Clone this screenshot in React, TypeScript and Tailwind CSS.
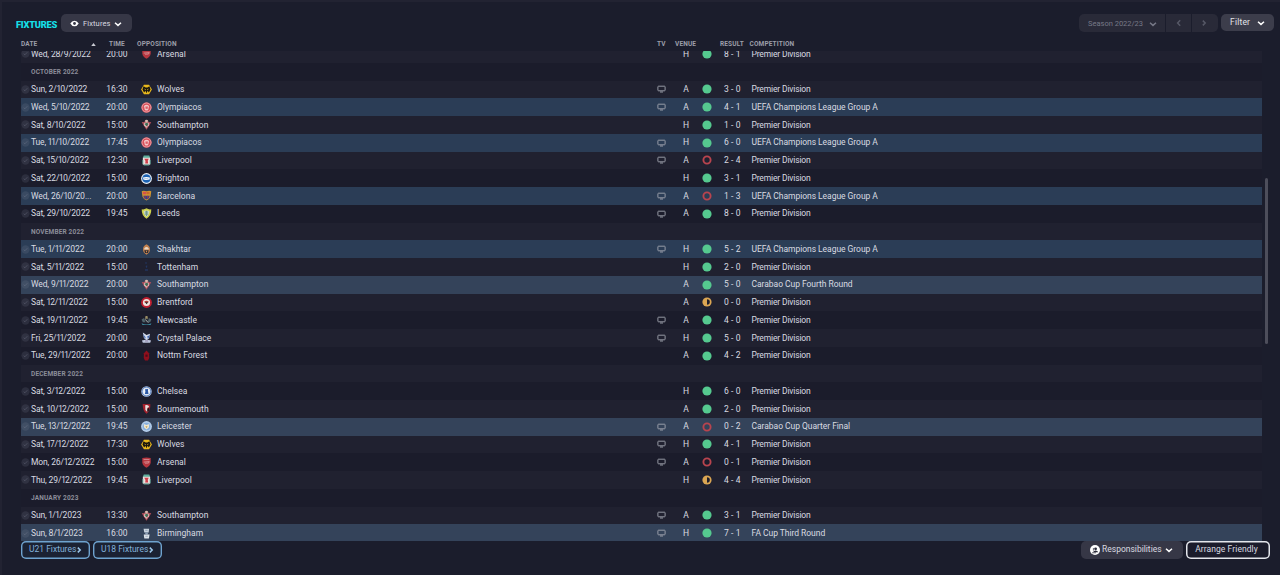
import type { ReactNode } from "react";

type Outcome = "win" | "draw" | "loss";
type Kind = "league" | "europe" | "cup";

interface Fixture {
  date: string;
  time: string;
  club: string;
  tv: boolean;
  venue: "H" | "A";
  outcome: Outcome;
  result: string;
  competition: string;
  kind: Kind;
}

interface MonthHeader {
  month: string;
}

const PL = "Premier Division";
const UCL = "UEFA Champions League Group A";

function match(
  date: string,
  time: string,
  club: string,
  tv: boolean,
  venue: "H" | "A",
  outcome: Outcome,
  result: string,
  competition: string = PL
): Fixture {
  const kind = competition === PL ? "league" : competition === UCL ? "europe" : "cup";
  return { date, time, club, tv, venue, outcome, result, competition, kind };
}

const rows: (Fixture | MonthHeader)[] = [
  match("Wed, 28/9/2022", "20:00", "Arsenal", false, "H", "win", "8 - 1"),
  { month: "October 2022" },
  match("Sun, 2/10/2022", "16:30", "Wolves", true, "A", "win", "3 - 0"),
  match("Wed, 5/10/2022", "20:00", "Olympiacos", true, "A", "win", "4 - 1", UCL),
  match("Sat, 8/10/2022", "15:00", "Southampton", false, "H", "win", "1 - 0"),
  match("Tue, 11/10/2022", "17:45", "Olympiacos", true, "H", "win", "6 - 0", UCL),
  match("Sat, 15/10/2022", "12:30", "Liverpool", true, "A", "loss", "2 - 4"),
  match("Sat, 22/10/2022", "15:00", "Brighton", false, "H", "win", "3 - 1"),
  match("Wed, 26/10/20...", "20:00", "Barcelona", true, "A", "loss", "1 - 3", UCL),
  match("Sat, 29/10/2022", "19:45", "Leeds", true, "A", "win", "8 - 0"),
  { month: "November 2022" },
  match("Tue, 1/11/2022", "20:00", "Shakhtar", true, "H", "win", "5 - 2", UCL),
  match("Sat, 5/11/2022", "15:00", "Tottenham", false, "H", "win", "2 - 0"),
  match("Wed, 9/11/2022", "20:00", "Southampton", false, "A", "win", "5 - 0", "Carabao Cup Fourth Round"),
  match("Sat, 12/11/2022", "15:00", "Brentford", false, "A", "draw", "0 - 0"),
  match("Sat, 19/11/2022", "19:45", "Newcastle", true, "A", "win", "4 - 0"),
  match("Fri, 25/11/2022", "20:00", "Crystal Palace", true, "H", "win", "5 - 0"),
  match("Tue, 29/11/2022", "20:00", "Nottm Forest", false, "A", "win", "4 - 2"),
  { month: "December 2022" },
  match("Sat, 3/12/2022", "15:00", "Chelsea", false, "H", "win", "6 - 0"),
  match("Sat, 10/12/2022", "15:00", "Bournemouth", false, "A", "win", "2 - 0"),
  match("Tue, 13/12/2022", "19:45", "Leicester", true, "A", "loss", "0 - 2", "Carabao Cup Quarter Final"),
  match("Sat, 17/12/2022", "17:30", "Wolves", true, "H", "win", "4 - 1"),
  match("Mon, 26/12/2022", "15:00", "Arsenal", true, "A", "loss", "0 - 1"),
  match("Thu, 29/12/2022", "19:45", "Liverpool", false, "H", "draw", "4 - 4"),
  { month: "January 2023" },
  match("Sun, 1/1/2023", "13:30", "Southampton", true, "A", "win", "3 - 1"),
  match("Sun, 8/1/2023", "16:00", "Birmingham", true, "H", "win", "7 - 1", "FA Cup Third Round"),
];

const crests: Record<string, ReactNode> = {
  Arsenal: (
    <>
      <path d="M1.4 1.2Q6 0 10.6 1.2V6.4Q10 9.8 6 11.8Q2 9.8 1.4 6.4Z" fill="#b5363f" />
      <path d="M2.8 2.8H9.2M3 5.6L9 5L8.2 6.6L4.4 6.8" stroke="#dba3a7" strokeWidth="0.8" fill="none" />
    </>
  ),
  Wolves: (
    <>
      <path d="M3.2 0.8H8.8L11.9 6L8.8 11.2H3.2L0.1 6Z" fill="#e9b91c" />
      <path d="M2.8 2.4L5 3.8H7L9.2 2.4L10.4 6L8.6 9.4L7.2 7.4L6 10L4.8 7.4L3.4 9.4L1.6 6Z" fill="#17150f" />
      <path d="M3.6 5L5.4 6L4.6 6.9ZM8.4 5L6.6 6L7.4 6.9Z" fill="#e9b91c" />
    </>
  ),
  Olympiacos: (
    <>
      <circle cx="6" cy="6" r="5.6" fill="#d8505a" />
      <circle cx="6" cy="6" r="4.9" fill="none" stroke="#efb7ba" strokeWidth="0.8" />
      <path d="M3.2 4.4Q6 1.8 8.8 4.4L7.8 8.6Q6 9.8 4.2 8.6Z" fill="#f3c6c8" />
      <path d="M4.8 4.8L7.6 4.8L7.2 7.6L5 7.4Z" fill="#dc6069" />
    </>
  ),
  Southampton: (
    <>
      <path d="M0.8 3.2L3.6 3.6L4.6 1H7.4L8.4 3.6L11.2 3.2L9.6 6.4L6 11.6L2.4 6.4Z" fill="#b3505a" />
      <path d="M3.8 4H8.2L8.4 6.8L6 9.6L3.6 6.8Z" fill="#e4dcd8" />
      <circle cx="6" cy="2.2" r="1.5" fill="#cfc0b2" />
      <path d="M4.8 4.4H7.4L7.8 6.6L6 7.8L4.4 6.6Z" fill="#3d7057" />
      <path d="M6 7.6L7.8 5.8L6.6 9Z" fill="#b8434a" />
    </>
  ),
  Liverpool: (
    <>
      <path d="M3 0.6H9L10 3.2H2Z" fill="#5fb09d" />
      <path d="M2 3H10V10.6H2Z" fill="#e9dedd" />
      <path d="M3.6 4.2H8.4L7.4 6.2L7.8 9.4H4.6L4.9 6.6Z" fill="#cf3f4a" />
      <path d="M2 5.4V10M10 5.4V10M3 11H9" stroke="#5fb09d" strokeWidth="0.9" />
    </>
  ),
  Brighton: (
    <>
      <circle cx="6" cy="6" r="5.9" fill="#e8eff6" />
      <circle cx="6" cy="6" r="4.7" fill="#1c63b4" />
      <path d="M2.2 5Q6 3.8 9.6 5L9.4 7.2Q6 8.2 2.6 7Z" fill="#fff" />
      <path d="M3.4 6.2H8" stroke="#5e93cf" strokeWidth="0.6" />
    </>
  ),
  Barcelona: (
    <>
      <path d="M0.8 1.4L3 0.8L6 1.4L9 0.8L11.2 1.4L10.4 7.4Q9 10.4 6 11.4Q3 10.4 1.6 7.4Z" fill="#d2952f" />
      <path d="M2 2H5.6V4.6H2Z" fill="#d6524b" />
      <path d="M6.8 2V4.6M8.6 2V4.6" stroke="#c0392b" strokeWidth="0.8" />
      <path d="M2.4 6.4H9.6L8.6 9L6 10.4L3.4 9Z" fill="#30468a" />
      <path d="M4.4 6.4V9.4M7.4 6.4V9.4" stroke="#a82b4c" strokeWidth="1.1" />
    </>
  ),
  Leeds: (
    <>
      <path d="M0.8 1.4Q3.5 2 6 0.4Q8.5 2 11.2 1.4Q11.6 8 6 11.8Q0.4 8 0.8 1.4Z" fill="#ccd04c" />
      <path d="M3 3.4Q6 1.8 9 3.4Q9.2 7.4 6 9.8Q2.8 7.4 3 3.4Z" fill="#e8ecd9" />
      <path d="M4.6 3.4V8M6 3V9M7.4 3.4V8" stroke="#3f7a72" strokeWidth="0.8" />
    </>
  ),
  Shakhtar: (
    <>
      <path d="M6 0.4Q10 2.4 9.8 6Q9.8 9.6 6 11.6Q2.2 9.6 2.2 6Q2 2.4 6 0.4Z" fill="#c0804e" />
      <path d="M3.6 5Q6 1.8 8.4 5V6H3.6Z" fill="#ead7c3" />
      <path d="M3.6 6.8H8.4L7.6 9.8H4.4Z" fill="#2b2a34" />
      <path d="M5.4 7.4H6.6V9H5.4Z" fill="#d58a44" />
    </>
  ),
  Tottenham: (
    <path d="M4.6 1.4H6.2V3H4.8ZM5 5.4L6.8 4.6V6.6L6 8ZM4.4 9H7.6V10.6H4.4Z" fill="#22355f" />
  ),
  Brentford: (
    <>
      <circle cx="6" cy="6" r="5.9" fill="#bf1f30" />
      <circle cx="6" cy="6" r="3.9" fill="#efe4df" />
      <path d="M3.6 5Q6 3 8.4 5L7.8 6.4H4.2Z" fill="#b4413c" />
      <path d="M4.4 5.8H7.6L6.2 8Z" fill="#27211f" />
    </>
  ),
  Newcastle: (
    <>
      <path d="M5 1H7L7.6 4H4.4Z" fill="#9c8f66" />
      <path d="M0.6 4.8L3.4 3.4L5 8H2Z" fill="#52666d" />
      <path d="M11.4 4.8L8.6 3.4L7 8H10Z" fill="#52666d" />
      <path d="M4 4.4H8L7.6 8.2H4.4Z" fill="#262c35" />
      <path d="M0.6 9Q6 11.8 11.4 9L10.4 11H1.6Z" fill="#3d8ea3" />
      <path d="M4.6 4.8L8 8.4" stroke="#c9cdd0" strokeWidth="0.9" />
    </>
  ),
  "Crystal Palace": (
    <>
      <path d="M2 0.6L6 3.4L9.8 2L8.8 7L6 9L3.2 6.6Z" fill="#d5dcec" />
      <path d="M2 2L5 5.6L4.4 8ZM6.8 4.6L9.8 3.6L7.6 7.8Z" fill="#4168b4" />
      <path d="M1 9.2L6 8.2L11 9.2L10 11.6H2Z" fill="#bdc6dd" />
      <path d="M4.4 9.8H7.8" stroke="#7f6a92" strokeWidth="0.8" />
    </>
  ),
  "Nottm Forest": (
    <>
      <path d="M6 0.6L8.8 3.6L9 8.8L7.6 11.4H4.4L3 8.8L3.2 3.6Z" fill="#8f0f1d" />
      <path d="M4.8 5H7.2V7.4H4.8Z" fill="#4c0c18" />
    </>
  ),
  Chelsea: (
    <>
      <circle cx="6" cy="6" r="5.7" fill="#c3d2ea" />
      <circle cx="6" cy="6" r="4.9" fill="none" stroke="#4470b4" strokeWidth="0.9" />
      <circle cx="6" cy="6" r="3.6" fill="#eef2f8" />
      <path d="M4.4 3.6L7.8 3.2L7.6 5L8.2 8.6H4.2L4.8 6Z" fill="#2a57a5" />
    </>
  ),
  Bournemouth: (
    <>
      <path d="M1.8 1L10.2 1.4Q10.6 8 6 11.8Q1.8 8.4 1.8 1Z" fill="#a8202c" />
      <path d="M4.6 2.4Q8 1.4 9 4.4L6.8 5.4L7.2 10L4.8 7.6Z" fill="#e6dedd" />
      <path d="M7 6.6L9 5V8L6.8 10Z" fill="#1d181c" />
    </>
  ),
  Leicester: (
    <>
      <circle cx="6" cy="6" r="5.9" fill="#b3cdea" />
      <circle cx="6" cy="6" r="4.2" fill="#86aedd" />
      <path d="M3 3.2L6 4.4L9 3.2L8.6 7L6 9.4L3.4 7Z" fill="#efe7cf" />
      <path d="M4.8 5.6H7.2L6 8Z" fill="#c0a157" />
    </>
  ),
  Birmingham: (
    <>
      <path d="M2.8 0.8H8.8L8.4 4.8H3.6Z" fill="#c9d4df" />
      <path d="M4.2 4.8H7.8L7.2 7H5Z" fill="#8b9fb6" />
      <path d="M3 7H9.4L8.6 11.4H3.6Z" fill="#dbe2e9" />
      <path d="M4.6 2.6H7.2M4.8 9H7.4" stroke="#8495ac" strokeWidth="0.7" />
    </>
  ),
};

function Chevron({ className = "", dir = "down" }: { className?: string; dir?: "down" | "left" | "right" }) {
  const d = dir === "down" ? "M1 2.8L4 5.4L7 2.8" : dir === "left" ? "M5.2 1.2L2.6 4L5.2 6.8" : "M2.8 1.6L5.2 4L2.8 6.4";
  return (
    <svg viewBox="0 0 8 8" className={`h-2 w-2 shrink-0 ${className}`} fill="none" stroke="currentColor" strokeWidth="1.5">
      <path d={d} />
    </svg>
  );
}

function OutcomeDot({ outcome }: { outcome: Outcome }) {
  return (
    <svg viewBox="0 0 10 10" className="h-[10px] w-[10px]">
      {outcome === "win" && <circle cx="5" cy="5" r="4.6" fill="#55c98f" />}
      {outcome === "loss" && <circle cx="5" cy="5" r="3.6" fill="none" stroke="#b8444e" strokeWidth="1.9" />}
      {outcome === "draw" && (
        <>
          <circle cx="5" cy="5" r="4.6" fill="#dba653" />
          <path d="M5 2.2A2.8 2.8 0 0 1 5 7.8Z" fill="#1f1f2c" />
        </>
      )}
    </svg>
  );
}

function TvIcon() {
  return (
    <svg viewBox="0 0 9 8" className="h-2 w-[9px]" fill="none" stroke="#a3a6b0" strokeWidth="0.9">
      <rect x="0.9" y="1.2" width="7.2" height="4.6" rx="0.6" />
      <path d="M3 7H6" />
    </svg>
  );
}

const kindBg: Record<Kind, string> = {
  league: "",
  europe: "bg-[#2b3d56]",
  cup: "bg-[#34435a]",
};

function FixtureRow({ fixture, striped }: { fixture: Fixture; striped: boolean }) {
  const bg = kindBg[fixture.kind] || (striped ? "bg-[#202130]" : "bg-[#1b1c2b]");
  return (
    <div
      className={`grid h-[17.75px] grid-cols-[10px_67px_38px_20.5px_494.5px_20.5px_29px_12.5px_38.5px_1fr] items-center whitespace-nowrap text-[#d9dbe1] ${bg}`}
    >
      <svg viewBox="0 0 10 10" className="h-[9px] w-[9px]">
        <circle cx="5" cy="5" r="4.6" fill="#8b8fa0" fillOpacity="0.16" />
        <path d="M3 5.2L4.4 6.4L7 3.6" stroke="#8b8fa0" strokeOpacity="0.35" fill="none" />
      </svg>
      <span className="proportional-nums tracking-[-0.12px]">{fixture.date}</span>
      <span className="text-center tracking-[0.05px]">{fixture.time}</span>
      <svg viewBox="0 0 12 12" className="h-[11px] w-[11px] justify-self-center">
        {crests[fixture.club]}
      </svg>
      <span className="pl-[0.5px] tracking-[0.02px]">{fixture.club}</span>
      <span className="flex justify-center">{fixture.tv && <TvIcon />}</span>
      <span className="text-center">{fixture.venue}</span>
      <span className="flex justify-center">
        <OutcomeDot outcome={fixture.outcome} />
      </span>
      <span className="text-center tracking-[0.1px]">{fixture.result}</span>
      <span className={fixture.kind === "league" ? "tracking-[-0.15px]" : "tracking-[-0.04px]"}>{fixture.competition}</span>
    </div>
  );
}

function TableHeader() {
  return (
    <div className="flex h-[15px] items-center pt-[2px] text-[6.5px] font-bold tracking-[0.15px] text-[#9b9da9]">
      <span className="w-[70px]">DATE</span>
      <svg viewBox="0 0 6 4" className="h-[3px] w-[5px]">
        <path d="M0 4L3 0L6 4Z" fill="#c9cbd3" />
      </svg>
      <span className="ml-[13px] w-7">TIME</span>
      <span className="w-[520px]">OPPOSITION</span>
      <span className="w-[18px]">TV</span>
      <span className="w-[45px]">VENUE</span>
      <span className="w-[29.5px]">RESULT</span>
      <span>COMPETITION</span>
    </div>
  );
}

function TopBar() {
  return (
    <div className="flex h-[22px] items-start pl-4 pr-[6px]">
      <h1 className="w-[45px] pt-[3px] text-[9.3px] font-black leading-[16px] tracking-[-0.24px] text-[#15dfe6]">FIXTURES</h1>
      <button className="flex h-[18px] w-[71px] items-center rounded-[5px] bg-[#363746] pl-[9px] pt-px text-[7.5px] tracking-[0.12px] text-[#d9dae0]">
        <svg viewBox="0 0 10 8" className="mr-1 h-[7px] w-[9px]">
          <path d="M0.2 4Q2 0.8 5 0.8T9.8 4Q8 7.2 5 7.2T0.2 4Z" fill="#fff" />
          <circle cx="5" cy="4" r="1.6" fill="#363746" />
        </svg>
        Fixtures
        <Chevron className="ml-[3px] text-white" />
      </button>
      <div className="ml-auto flex h-[18px] overflow-hidden rounded-[5px] text-[7.5px] text-[#777987]">
        <button className="flex w-[86px] items-center justify-between bg-[#292a38] pl-[9px] pr-2 pt-px">
          Season 2022/23
          <Chevron />
        </button>
        <button className="ml-px flex w-[25px] items-center justify-center bg-[#292a38] text-[#565866]">
          <Chevron dir="left" />
        </button>
        <button className="ml-px flex w-[26px] items-center justify-center bg-[#292a38] pr-[2px] text-[#565866]">
          <Chevron dir="right" />
        </button>
      </div>
      <button className="ml-[3px] flex h-[17px] w-[53px] items-center rounded-[5px] bg-[#3c3d4b] pl-[9px] text-[8.5px] tracking-[0.2px] text-[#e3e4e9]">
        Filter
        <Chevron className="ml-[7px] mt-px text-white" />
      </button>
    </div>
  );
}

function BottomBar() {
  return (
    <div className="flex h-[18px] items-center gap-[3px] pl-[21px] pr-[10px] text-[8.5px]">
      {["U21 Fixtures", "U18 Fixtures"].map((label) => (
        <button
          key={label}
          className="flex h-[18px] w-[69px] items-center rounded-[5px] bg-[#1b2233] pb-px pl-2 text-[#82b1da] shadow-[inset_0_0_0_1.4px_#6fa3cf]"
        >
          {label}
          <Chevron dir="right" className="-ml-px mt-px text-[#9cc8ec]" />
        </button>
      ))}
      <button className="ml-auto flex h-[18px] w-[102px] items-center rounded-[5px] bg-[#363746] pb-px pl-[9px] text-[#d9dae0]">
        <svg viewBox="0 0 10 10" className="mr-[2px] mt-px h-[10px] w-[10px]">
          <circle cx="5" cy="5" r="5" fill="#fff" />
          <circle cx="5.6" cy="3.8" r="1.4" fill="#292a38" />
          <path d="M3 7.2Q3.6 5.4 5.6 5.4T8.2 7.2Z" fill="#292a38" />
          <path d="M3.4 3V5.6M2 7.8H6" stroke="#292a38" strokeWidth="0.7" />
        </svg>
        Responsibilities
        <Chevron className="ml-[3px] mt-px text-white" />
      </button>
      <button className="h-[18px] w-[84px] rounded-[5px] bg-[#1b1c2b] pb-px pr-[3px] tracking-[0.08px] text-[#d9dae0] shadow-[inset_0_0_0_1.5px_#e4e6ec]">
        Arrange Friendly
      </button>
    </div>
  );
}

export default function App() {
  return (
    <div className="h-[575px] w-[1280px] overflow-hidden border-l-2 border-t-2 border-[#222332] bg-[#1b1d2c] font-['Roboto',sans-serif]">
      <div className="-ml-[2px] flex h-full flex-col pt-3">
        <TopBar />
        <div className="flex h-[505px] pl-[21px]">
          <div className="w-[1241px]">
            <TableHeader />
            <div className="h-[490px] overflow-hidden text-[8.5px]">
              <div className="-mt-[6px]">
                {rows.map((row, i) =>
                  "month" in row ? (
                    <div
                      key={i}
                      className={`flex h-[17.75px] items-center pl-[10px] pt-[2px] text-[6.5px] font-bold uppercase tracking-[0.16px] text-[#8b8d99] ${
                        i % 2 === 0 ? "bg-[#202130]" : "bg-[#1b1c2b]"
                      }`}
                    >
                      {row.month}
                    </div>
                  ) : (
                    <FixtureRow key={i} fixture={row} striped={i % 2 === 0} />
                  )
                )}
              </div>
            </div>
          </div>
          <div className="ml-[3px] mt-[142px] h-[166px] w-[3px] rounded-full bg-[#4d4e5b]" />
        </div>
        <BottomBar />
      </div>
    </div>
  );
}
